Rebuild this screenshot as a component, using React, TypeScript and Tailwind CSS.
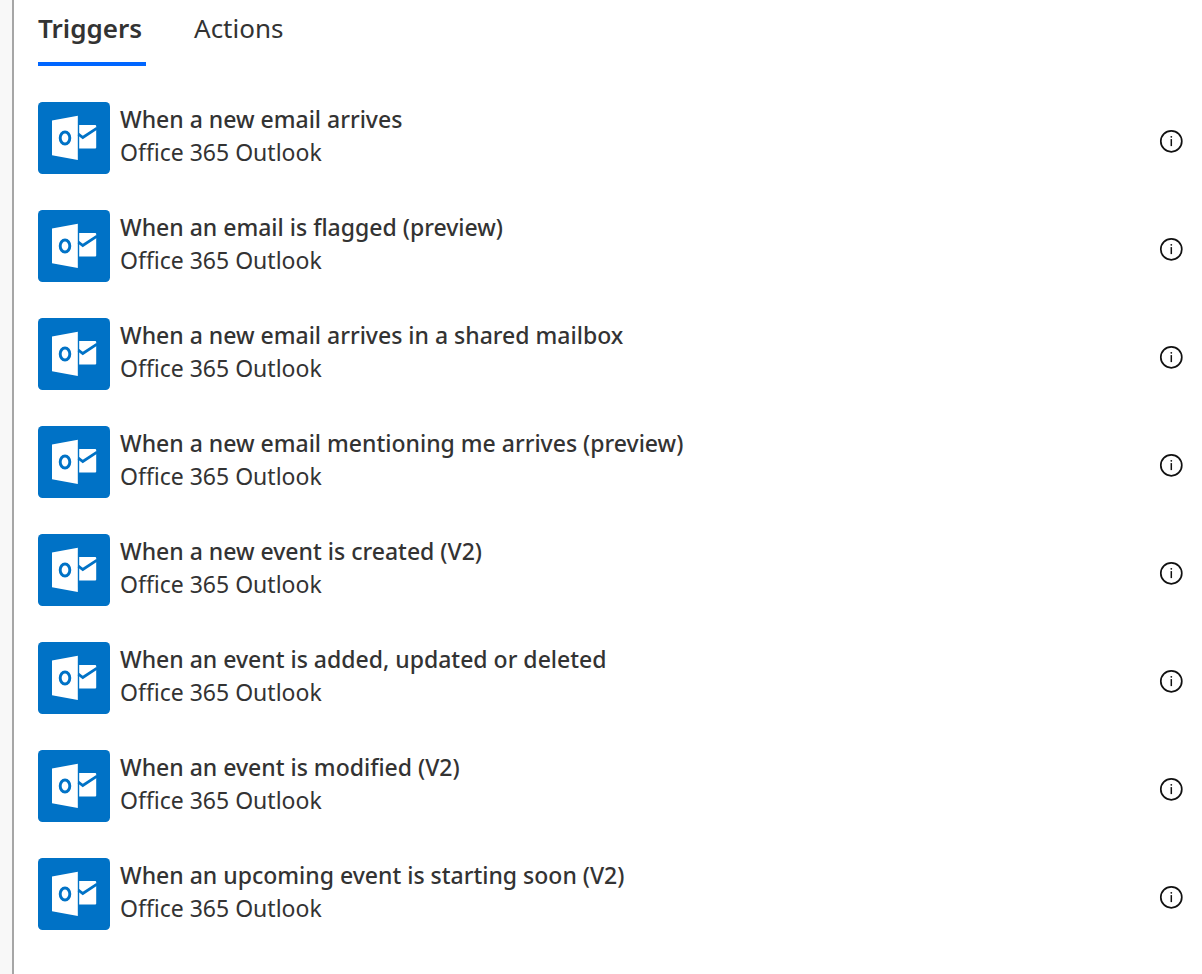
import { useState } from "react";

const triggers = [
  "When a new email arrives",
  "When an email is flagged (preview)",
  "When a new email arrives in a shared mailbox",
  "When a new email mentioning me arrives (preview)",
  "When a new event is created (V2)",
  "When an event is added, updated or deleted",
  "When an event is modified (V2)",
  "When an upcoming event is starting soon (V2)",
];

function OutlookIcon() {
  return (
    <svg viewBox="0 0 72 72" className="size-[72px] shrink-0" aria-hidden="true">
      <rect width="72" height="72" rx="4.5" fill="#0072c6" />
      <path d="M14 18.4 39.8 13.8V58L14 53.2Z" fill="#fff" />
      <ellipse cx="27" cy="36" rx="4.8" ry="6" fill="none" stroke="#0072c6" strokeWidth="2.9" />
      <path d="M41.2 23H57.2Q58.2 23 58.2 24V45.5Q58.2 46.5 57.2 46.5H41.2Z" fill="#fff" />
      <path d="M40.4 32.2 44.8 35.5 59 26.2" fill="none" stroke="#0072c6" strokeWidth="2.8" />
    </svg>
  );
}

function InfoIcon() {
  return (
    <svg viewBox="0 0 24 24" className="size-6" aria-hidden="true">
      <circle cx="12.3" cy="12.3" r="10.5" fill="none" stroke="#111111" strokeWidth="1.7" />
      <path d="M12.3 10.1V17.1" stroke="#111111" strokeWidth="1.5" />
      <circle cx="12.3" cy="7.8" r="0.9" fill="#111111" />
    </svg>
  );
}

function Tab({ label, selected, onSelect }: { label: string; selected: boolean; onSelect: () => void }) {
  return (
    <button
      type="button"
      role="tab"
      aria-selected={selected}
      onClick={onSelect}
      className={
        selected
          ? "h-[66px] border-b-4 border-[#0066ff] pr-1 pb-1.5 text-left text-[26px] leading-8 font-semibold"
          : "h-[66px] border-b-4 border-transparent pr-1 pb-1.5 text-left text-[26px] leading-8"
      }
    >
      {label}
    </button>
  );
}

export default function App() {
  const [tab, setTab] = useState("Triggers");

  return (
    <div className="flex min-h-screen bg-[#f8f8f8] pl-3 font-['Noto_Sans','Open_Sans',sans-serif] text-[#333333]">
      <main className="min-w-0 flex-1 border-l-2 border-[#a6a6a6] bg-white pr-[19px] pl-6">
        <div role="tablist" className="flex gap-12">
          <Tab label="Triggers" selected={tab === "Triggers"} onSelect={() => setTab("Triggers")} />
          <Tab label="Actions" selected={tab === "Actions"} onSelect={() => setTab("Actions")} />
        </div>
        <ul className="flex flex-col gap-9 pt-9">
          {triggers.map((name) => (
            <li key={name} className="flex items-center">
              <OutlookIcon />
              <div className="min-w-0 flex-1 pb-1 pl-[10px] text-[23px] leading-[33px]">
                <p className="font-medium">{name}</p>
                <p>Office 365 Outlook</p>
              </div>
              <button type="button" aria-label={`About ${name}`} className="mt-[6px]">
                <InfoIcon />
              </button>
            </li>
          ))}
        </ul>
      </main>
    </div>
  );
}
